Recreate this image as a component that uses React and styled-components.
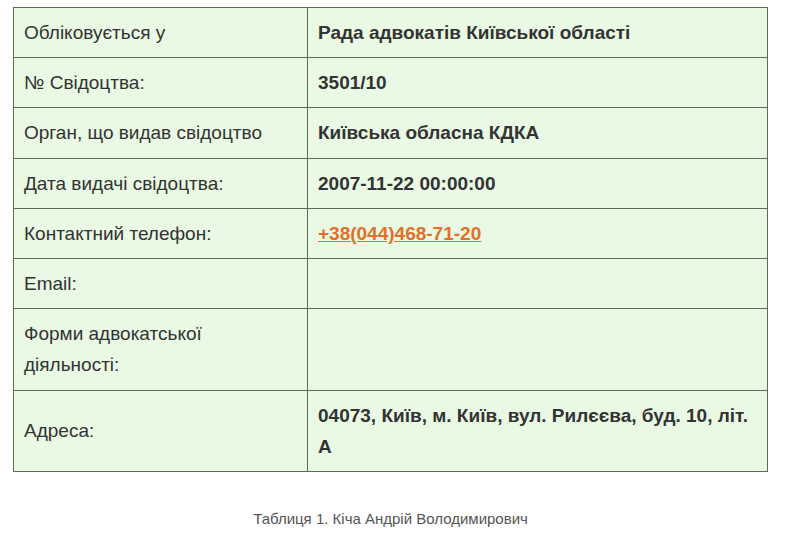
import React from "react"
import styled, { createGlobalStyle } from "styled-components"

const GlobalStyle = createGlobalStyle`
  body {
    margin: 0;
    background: #fff;
    font-family: "Liberation Sans", Arial, sans-serif;
  }
`

const Figure = styled.figure`
  margin: 0;
  padding: 7px 0 0 13px;
  width: 755px;
`

const Table = styled.table`
  width: 755px;
  border-collapse: collapse;
  background: #e9f9e3;
  font-size: 19px;
  line-height: 31.2px;
  color: #333;
`

const Cell = styled.td`
  border: 1px solid #5e6b52;
  padding: 9px 10px 9px 10px;
  vertical-align: middle;
  width: ${p => p.$w || "auto"};
  font-weight: ${p => (p.$bold ? 700 : 400)};
`

const Phone = styled.a`
  color: #e0702a;
  text-decoration: underline;
  font-weight: 700;
`

const Caption = styled.figcaption`
  text-align: center;
  font-size: 15px;
  color: #555;
  margin-top: 38px;
`

const rows = [
  ["Обліковується у", "Рада адвокатів Київської області"],
  ["№ Свідоцтва:", "3501/10"],
  ["Орган, що видав свідоцтво", "Київська обласна КДКА"],
  ["Дата видачі свідоцтва:", "2007-11-22 00:00:00"],
  ["Контактний телефон:", <Phone href="#">+38(044)468-71-20</Phone>],
  ["Email:", ""],
  ["Форми адвокатської діяльності:", ""],
  ["Адреса:", "04073, Київ, м. Київ, вул. Рилєєва, буд. 10, літ. А"],
]

export default function App() {
  return (
    <>
      <GlobalStyle />
      <Figure>
        <Table>
          <tbody>
            {rows.map(([label, value], i) => (
              <tr key={i}>
                <Cell $w="273px">{label}</Cell>
                <Cell $bold>{value}</Cell>
              </tr>
            ))}
          </tbody>
        </Table>
        <Caption>Таблиця 1. Кіча Андрій Володимирович</Caption>
      </Figure>
    </>
  )
}
